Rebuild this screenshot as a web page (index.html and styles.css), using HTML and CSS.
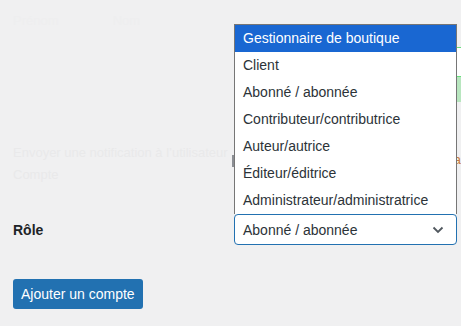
FILE: index.html
```html
<!DOCTYPE html>
<html lang="fr">
  <head>
    <meta charset="UTF-8" />
    <meta name="viewport" content="width=device-width, initial-scale=1.0" />
    <title>Ajouter un compte</title>
    <link rel="stylesheet" href="styles.css">
  </head>

  <body>
    <div class="page">
      <div class="faint-top">Prénom &nbsp;&nbsp;&nbsp;&nbsp;&nbsp;&nbsp;&nbsp;&nbsp;&nbsp;&nbsp;&nbsp;&nbsp;&nbsp; Nom</div>

      <div class="pass-row">
        <div class="pass-input"></div>
        <div class="pass-meter"></div>
      </div>

      <div class="notify-row">
        <div class="faint-label">
          <div>Envoyer une notification à l’utilisateur</div>
          <div>Compte</div>
        </div>
        <div class="notify-field">
          <span class="checkbox"></span>
          <span class="notify-text">a</span>
        </div>
      </div>

      <div class="role-row">
        <label class="role-label">Rôle</label>
        <div class="select-wrap">
          <div class="select">
            <span>Abonné / abonnée</span>
            <svg class="chevron" width="12" height="8" viewBox="0 0 12 8">
              <path d="M1.5 1.5 L6 6 L10.5 1.5" fill="none" stroke="#50575e" stroke-width="1.8" />
            </svg>
          </div>

          <ul class="options">
            <li class="active">Gestionnaire de boutique</li>
            <li>Client</li>
            <li>Abonné / abonnée</li>
            <li>Contributeur/contributrice</li>
            <li>Auteur/autrice</li>
            <li>Éditeur/éditrice</li>
            <li>Administrateur/administratrice</li>
          </ul>
        </div>
      </div>

      <button class="btn">Ajouter un compte</button>
    </div>
  </body>
</html>
```

FILE: styles.css
```css
* {
  margin: 0;
  padding: 0;
  box-sizing: border-box;
}

body {
  font-family: "Segoe UI", "Liberation Sans", Arial, sans-serif;
  font-size: 14px;
  background: #f0f0f1;
  color: #1d2327;
  overflow: hidden;
}

.page {
  padding-left: 13px;
  height: 326px;
  overflow: hidden;
}

.faint-top {
  height: 47px;
  padding-top: 13px;
  font-size: 13px;
  color: #eeeeef;
}

.pass-row {
  display: flex;
  flex-direction: column;
  padding-left: 444px;
}

.pass-input {
  width: 4px;
  height: 29px;
  background: #fff;
  border-top: 1px solid #68de7c;
}

.pass-meter {
  width: 4px;
  height: 26px;
  background: #b8e6bf;
  border-top: 1px solid #68de7c;
}

.notify-row {
  display: flex;
  height: 112px;
  padding-top: 40px;
}

.faint-label {
  width: 220px;
  color: #e9e9ea;
  font-size: 13px;
  line-height: 22px;
  white-space: nowrap;
}

.notify-field {
  display: flex;
  align-items: flex-start;
  gap: 206px;
  padding-top: 13px;
}

.checkbox {
  width: 16px;
  height: 12px;
  border-left: 2px solid #8c8f94;
}

.notify-text {
  color: #c77c3d;
  font-size: 13px;
  line-height: 10px;
}

.role-row {
  display: flex;
  align-items: center;
}

.role-label {
  width: 221px;
  font-weight: bold;
}

.select-wrap {
  position: relative;
  width: 223px;
}

.select {
  display: flex;
  justify-content: space-between;
  align-items: center;
  height: 31px;
  padding: 0 12px 0 8px;
  background: #fff;
  border: 1px solid #2271b1;
  border-radius: 4px;
  color: #2c3338;
}

.chevron {
  display: block;
}

.options {
  position: absolute;
  left: 0;
  bottom: 31px;
  width: 223px;
  list-style: none;
  background: #fff;
  border: 1px solid #767676;
  border-bottom: none;
  color: #2c3338;
}

.options li {
  height: 27px;
  line-height: 27px;
  padding-left: 8px;
  white-space: nowrap;
}

.options li.active {
  background: #1967d2;
  color: #fff;
}

.btn {
  margin-top: 34px;
  background: #2271b1;
  color: #fff;
  font-family: inherit;
  font-size: 14px;
  height: 30px;
  padding: 0 8px;
  border: none;
  border-radius: 3px;
}
```
